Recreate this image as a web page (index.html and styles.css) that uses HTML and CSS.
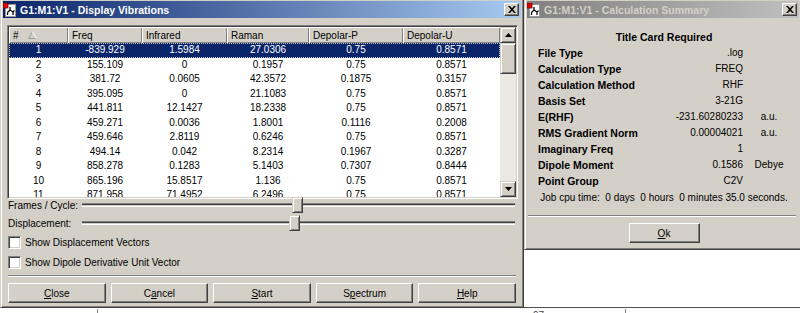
FILE: index.html
```html
<!DOCTYPE html>
<html>
<head>
<meta charset="utf-8">
<title>Display Vibrations</title>
<link rel="stylesheet" href="styles.css">
</head>
<body>
<div class="backdrop">
  <div class="ruler">
    <span class="tick t1"></span>
    <span class="tick t2"></span>
    <span class="rtext">97</span>
  </div>
</div>

<div class="win win-vib">
  <div class="titlebar active">
    <svg class="appicon" width="14" height="14" viewBox="0 0 14 14">
      <rect x="2.5" y="1.5" width="10" height="12" fill="#fff" stroke="#9a9a9a"/>
      <path d="M7 4v3M7 7l-2.5 2.5M7 7l3 2v3M10 9l1.5-1.5M4.5 9.5v2.5" stroke="#000" stroke-width="1.3" fill="none"/>
      <rect x="0" y="0" width="5" height="5" fill="#e00000" stroke="#700" stroke-width="0.8"/>
    </svg>
    <span class="ttext">G1:M1:V1 - Display Vibrations</span>
    <span class="xbtn"><svg width="8" height="7" viewBox="0 0 8 7"><path d="M0 0h2l2 2.3L6 0h2L5 3.5 8 7H6L4 4.7 2 7H0l3-3.5z" fill="#000"/></svg></span>
  </div>
  <div class="vib-body">
    <div class="list">
      <div class="list-main">
        <div class="hdr cols">
          <div class="hc"># <svg class="sorttri" width="9" height="8" viewBox="0 0 9 8"><path d="M4.5 0.5L0.5 7.5H8.5" stroke="#9c9c9c" fill="none"/><path d="M4.5 0.5L8.5 7.5" stroke="#fff" fill="none"/></svg></div>
          <div class="hc">Freq</div>
          <div class="hc">Infrared</div>
          <div class="hc">Raman</div>
          <div class="hc">Depolar-P</div>
          <div class="hc">Depolar-U</div>
        </div>
        <div class="rows">
          <div class="row cols sel"><span>1</span><span>-839.929</span><span>1.5984</span><span>27.0306</span><span>0.75</span><span>0.8571</span></div>
          <div class="row cols"><span>2</span><span>155.109</span><span>0</span><span>0.1957</span><span>0.75</span><span>0.8571</span></div>
          <div class="row cols"><span>3</span><span>381.72</span><span>0.0605</span><span>42.3572</span><span>0.1875</span><span>0.3157</span></div>
          <div class="row cols"><span>4</span><span>395.095</span><span>0</span><span>21.1083</span><span>0.75</span><span>0.8571</span></div>
          <div class="row cols"><span>5</span><span>441.811</span><span>12.1427</span><span>18.2338</span><span>0.75</span><span>0.8571</span></div>
          <div class="row cols"><span>6</span><span>459.271</span><span>0.0036</span><span>1.8001</span><span>0.1116</span><span>0.2008</span></div>
          <div class="row cols"><span>7</span><span>459.646</span><span>2.8119</span><span>0.6246</span><span>0.75</span><span>0.8571</span></div>
          <div class="row cols"><span>8</span><span>494.14</span><span>0.042</span><span>8.2314</span><span>0.1967</span><span>0.3287</span></div>
          <div class="row cols"><span>9</span><span>858.278</span><span>0.1283</span><span>5.1403</span><span>0.7307</span><span>0.8444</span></div>
          <div class="row cols"><span>10</span><span>865.196</span><span>15.8517</span><span>1.136</span><span>0.75</span><span>0.8571</span></div>
          <div class="row cols"><span>11</span><span>871.958</span><span>71.4952</span><span>6.2496</span><span>0.75</span><span>0.8571</span></div>
        </div>
      </div>
      <div class="vscroll">
        <div class="raised sb-btn"><svg width="7" height="4" viewBox="0 0 7 4"><path d="M3.5 0L7 4H0z" fill="#000"/></svg></div>
        <div class="raised sb-thumb"></div>
        <div class="sb-track"></div>
        <div class="raised sb-btn"><svg width="7" height="4" viewBox="0 0 7 4"><path d="M0 0h7L3.5 4z" fill="#000"/></svg></div>
      </div>
    </div>

    <div class="sliders">
      <div class="srow">
        <span class="slabel">Frames / Cycle:</span>
        <div class="track"><span class="raised thumb th1"></span></div>
      </div>
      <div class="srow">
        <span class="slabel">Displacement:</span>
        <div class="track"><span class="raised thumb th2"></span></div>
      </div>
    </div>

    <div class="crow"><span class="cbox"></span><span>Show Displacement Vectors</span></div>
    <div class="crow"><span class="cbox"></span><span>Show Dipole Derivative Unit Vector</span></div>

    <div class="sep"></div>

    <div class="btns">
      <div class="btn"><span><u>C</u>lose</span></div>
      <div class="btn"><span>C<u>a</u>ncel</span></div>
      <div class="btn"><span><u>S</u>tart</span></div>
      <div class="btn"><span>S<u>p</u>ectrum</span></div>
      <div class="btn"><span><u>H</u>elp</span></div>
    </div>
  </div>
</div>

<div class="win win-sum">
  <div class="titlebar inactive">
    <svg class="appicon" width="14" height="14" viewBox="0 0 14 14">
      <rect x="2.5" y="1.5" width="10" height="12" fill="#fff" stroke="#9a9a9a"/>
      <path d="M7 4v3M7 7l-2.5 2.5M7 7l3 2v3M10 9l1.5-1.5M4.5 9.5v2.5" stroke="#000" stroke-width="1.3" fill="none"/>
      <rect x="0" y="0" width="5" height="5" fill="#e00000" stroke="#700" stroke-width="0.8"/>
    </svg>
    <span class="ttext">G1:M1:V1 - Calculation Summary</span>
    <span class="xbtn"><svg width="8" height="7" viewBox="0 0 8 7"><path d="M0 0h2l2 2.3L6 0h2L5 3.5 8 7H6L4 4.7 2 7H0l3-3.5z" fill="#000"/></svg></span>
  </div>
  <div class="sum-body">
    <div class="sum-title">Title Card Required</div>
    <div class="sum-grid">
      <span class="k">File Type</span><span class="v">.log</span><span class="u"></span>
      <span class="k">Calculation Type</span><span class="v">FREQ</span><span class="u"></span>
      <span class="k">Calculation Method</span><span class="v">RHF</span><span class="u"></span>
      <span class="k">Basis Set</span><span class="v">3-21G</span><span class="u"></span>
      <span class="k">E(RHF)</span><span class="v">-231.60280233</span><span class="u">a.u.</span>
      <span class="k">RMS Gradient Norm</span><span class="v">0.00004021</span><span class="u">a.u.</span>
      <span class="k">Imaginary Freq</span><span class="v">1</span><span class="u"></span>
      <span class="k">Dipole Moment</span><span class="v">0.1586</span><span class="u">Debye</span>
      <span class="k">Point Group</span><span class="v">C2V</span><span class="u"></span>
    </div>
    <div class="cpu">Job cpu time:  0 days  0 hours  0 minutes 35.0 seconds.</div>
    <div class="sep sep2"></div>
    <div class="btn ok"><span><u>O</u>k</span></div>
  </div>
</div>
</body>
</html>
```

FILE: styles.css
```css
* {
  box-sizing: border-box;
  margin: 0;
  padding: 0;
}

html, body {
  width: 800px;
  height: 313px;
  overflow: hidden;
}

body {
  position: relative;
  font-family: "Liberation Sans", Arial, sans-serif;
  font-size: 10px;
  color: #000;
  background: #fff;
}

/* background window peeking below */
.backdrop {
  position: absolute;
  inset: 0;
  background: #fff;
}

.ruler {
  position: absolute;
  left: 0;
  right: 0;
  top: 307px;
  height: 6px;
  border-top: 1px solid #505050;
}

.tick {
  position: absolute;
  top: 1px;
  width: 1px;
  height: 5px;
  background: #808080;
}

.t1 { left: 97px; }
.t2 { left: 625px; }

.rtext {
  position: absolute;
  left: 533px;
  top: 2px;
  font-size: 10px;
  color: #444;
}

/* windows */
.win {
  position: absolute;
  display: flex;
  flex-direction: column;
  background: #d4d0c8;
  border: 1px solid;
  border-color: #d4d0c8 #404040 #404040 #d4d0c8;
  box-shadow: inset 1px 1px #fff, inset -1px -1px #808080;
  padding: 2px;
}

.win-vib {
  left: 0;
  top: -2px;
  width: 524px;
  height: 310px;
}

.win-sum {
  left: 524px;
  top: -2px;
  width: 278px;
  height: 252px;
}

.titlebar {
  height: 17px;
  flex: none;
  display: flex;
  align-items: center;
  gap: 3px;
  padding: 0 2px 0 0;
}

.titlebar.active {
  background: linear-gradient(to right, #0a246a, #a6caf0);
}

.titlebar.inactive {
  background: linear-gradient(to right, #808080, #c0c0c0);
}

.appicon {
  flex: none;
}

.ttext {
  font-weight: bold;
  font-size: 10.5px;
  white-space: nowrap;
}

.active .ttext { color: #fff; }
.inactive .ttext { color: #d4d0c8; }

.xbtn {
  margin-left: auto;
  width: 15px;
  height: 13px;
  display: flex;
  align-items: center;
  justify-content: center;
  background: #d4d0c8;
  border: 1px solid;
  border-color: #fff #404040 #404040 #fff;
  box-shadow: inset -1px -1px #808080;
}

.raised {
  background: #d4d0c8;
  border: 1px solid;
  border-color: #d4d0c8 #404040 #404040 #d4d0c8;
  box-shadow: inset 1px 1px #fff, inset -1px -1px #808080;
}

/* Display Vibrations body */
.vib-body {
  flex: 1;
  display: flex;
  flex-direction: column;
  padding: 7px 3px 0 4px;
}

.list {
  height: 174px;
  flex: none;
  display: flex;
  background: #fff;
  border: 1px solid;
  border-color: #808080 #fff #fff #808080;
  box-shadow: inset 1px 1px #404040, inset -1px -1px #d4d0c8;
  padding: 1px;
}

.list-main {
  flex: 1;
  display: flex;
  flex-direction: column;
  overflow: hidden;
}

.cols {
  display: grid;
  grid-template-columns: 59px 74px 85px 82px 94px 97px;
}

.hdr {
  height: 16px;
  flex: none;
}

.hc {
  display: flex;
  align-items: center;
  gap: 9px;
  padding-left: 4px;
  background: #d4d0c8;
  box-shadow: inset 1px 1px #fff, inset -1px -1px #808080;
  white-space: nowrap;
}

.sorttri {
  margin-top: -1px;
}

.rows {
  flex: 1;
  overflow: hidden;
}

.row {
  height: 14.5px;
  line-height: 14.5px;
  text-align: center;
}

.row.sel {
  background: #0a246a;
  color: #fff;
  outline: 1px dotted rgba(255, 255, 220, 0.75);
  outline-offset: -1px;
}

.vscroll {
  width: 16px;
  flex: none;
  display: flex;
  flex-direction: column;
  background: #ebe9e4;
}

.sb-btn {
  height: 16px;
  flex: none;
  display: flex;
  align-items: center;
  justify-content: center;
}

.sb-thumb {
  height: 31px;
  flex: none;
}

.sb-track {
  flex: 1;
}

/* sliders */
.sliders {
  margin-top: -3px;
}

.srow {
  height: 18px;
  display: flex;
  align-items: center;
  padding-left: 1px;
}

.slabel {
  width: 74px;
  flex: none;
  white-space: nowrap;
}

.track {
  flex: 1;
  height: 4px;
  margin-right: 3px;
  position: relative;
  background: linear-gradient(#808080 0 1px, #404040 1px 2px, #d4d0c8 2px 3px, #fff 3px 4px);
}

.thumb {
  position: absolute;
  top: -6px;
  width: 11px;
  height: 16px;
}

.th1 { left: 210px; }
.th2 { left: 207px; }

/* checkboxes */
.crow {
  height: 20px;
  display: flex;
  align-items: center;
  gap: 4px;
  padding-left: 1px;
}

.cbox {
  width: 13px;
  height: 13px;
  flex: none;
  background: #fff;
  border: 1px solid;
  border-color: #808080 #fff #fff #808080;
  box-shadow: inset 1px 1px #404040, inset -1px -1px #d4d0c8;
}

.sep {
  height: 2px;
  flex: none;
  border-top: 1px solid #808080;
  border-bottom: 1px solid #fff;
  margin: 3px 2px 0 1px;
}

.btns {
  display: flex;
  gap: 5px;
  margin-top: 6px;
  padding: 0 2px 0 1px;
}

.btn {
  flex: 1;
  height: 20px;
  display: flex;
  align-items: center;
  justify-content: center;
  background: #d4d0c8;
  border: 1px solid;
  border-color: #fff #404040 #404040 #fff;
  box-shadow: inset -1px -1px #808080;
  white-space: nowrap;
}

/* Calculation Summary body */
.sum-body {
  flex: 1;
  display: flex;
  flex-direction: column;
  padding: 11px 9px 0 11px;
}

.sum-title {
  text-align: center;
  font-weight: bold;
  font-size: 10.5px;
  line-height: 16px;
}

.sum-grid {
  display: grid;
  grid-template-columns: 1fr auto 42px;
  column-gap: 5px;
  grid-auto-rows: 16px;
  line-height: 16px;
}

.k {
  font-weight: bold;
  font-size: 10.5px;
  white-space: nowrap;
}

.v {
  text-align: right;
  white-space: nowrap;
}

.u {
  text-align: center;
}

.cpu {
  margin-top: 1px;
  text-align: center;
  white-space: pre;
  line-height: 16px;
}

.sep2 {
  margin: 9px -6px 0 -10px;
}

.ok {
  flex: none;
  width: 71px;
  height: 20px;
  margin: 6px auto 0;
}
```
